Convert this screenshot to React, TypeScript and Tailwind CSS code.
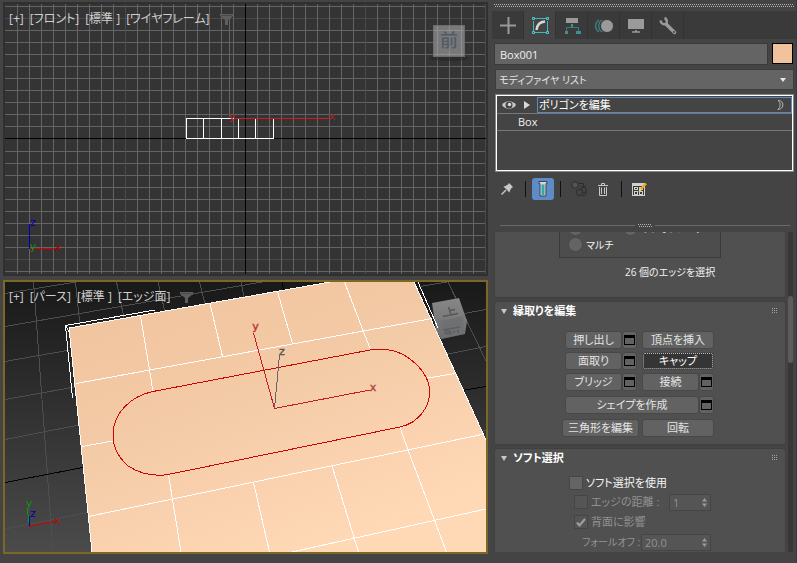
import { useState, type ReactNode } from "react";
import { clsx } from "clsx";

const range = (from: number, to: number, step: number) => {
  const out: number[] = [];
  for (let v = from; v <= to; v += step) out.push(v);
  return out;
};

export default function App() {
  return (
    <div className="flex h-screen min-h-[563px] gap-1 overflow-hidden border-r border-[#343850] bg-[#444444] font-['Open_Sans','Noto_Sans_CJK_JP',sans-serif] text-[11px] leading-4 text-[#e4e4e4] [font-feature-settings:'palt']">
      <main className="flex min-w-0 flex-1 flex-col gap-1 pt-0.5 pb-[9px] pl-[3px]">
        <Viewport labels={["[+]", "[フロント]", "[標準 ]", "[ワイヤフレーム]"]}>
          <FrontScene />
        </Viewport>
        <Viewport active labels={["[+]", "[パース]", "[標準 ]", "[エッジ面]"]}>
          <PerspectiveScene />
        </Viewport>
      </main>
      <CommandPanel />
    </div>
  );
}

function Viewport({ labels, active, children }: { labels: string[]; active?: boolean; children: ReactNode }) {
  return (
    <section
      className={clsx(
        "relative min-h-0 flex-1 overflow-hidden border-2",
        active ? "border-[#7c6727]" : "border-[#303030]"
      )}
    >
      {children}
      <div className="absolute top-[7px] left-1 flex items-center gap-1.5 text-[12px] leading-4 text-[#cfcfcf]">
        {labels.map((label) => (
          <button key={label} type="button" className="whitespace-nowrap">
            {label}
          </button>
        ))}
        <button type="button" aria-label="フィルタ" className="ml-1">
          <svg width="13" height="11" viewBox="0 0 13 11" className="block">
            <path d="M0 0h13v2L8 6v5H5V6L0 2z" fill="#5e5e5e" />
            <path d="M1 1.5h11" stroke="#4a4a4a" />
          </svg>
        </button>
      </div>
    </section>
  );
}

function FrontScene() {
  const columns = range(17, 485, 12);
  const rows = [...range(6, 126, 12), ...range(151, 271, 12)];
  return (
    <svg viewBox="5 4 481 270" preserveAspectRatio="xMidYMid slice" className="block h-full w-full bg-[#343434]">
      <g shapeRendering="crispEdges">
        {rows.map((y) => (
          <rect key={y} x="5" y={y} width="480" height="1" fill={y === 18 || y === 259 ? "#4a4a4a" : "#646464"} />
        ))}
        {columns.map((x) => (
          <rect key={x} x={x} y="4" width="1" height="270" fill={(x - 5) % 120 === 0 ? "#4a4a4a" : "#646464"} />
        ))}
        <rect x="229" y="14" width="1" height="103" fill="#646464" />
        <rect x="5" y="138" width="481" height="1" fill="#000" />
        <rect x="245" y="4" width="1" height="270" fill="#000" />
        <path d="M186 118.5H274M186 138.5H274M186.500 118V139M203.500 118V139M221.500 118V139M238.500 118V139M255.500 118V139M273.500 118V139" stroke="#fff" fill="none" />
        <rect x="234" y="118" width="97" height="1" fill="#d01c20" />
        <rect x="30" y="248" width="26" height="1" fill="#d40000" />
        <rect x="29" y="224" width="1" height="25" fill="#0000b4" />
      </g>
      <g fontSize="11" fontFamily="DejaVu Sans" textAnchor="middle">
        <text x="232" y="120" fill="#c02024">y</text>
        <text x="332" y="120" fill="#a82024">x</text>
        <text x="33" y="226" fill="#0000b4">z</text>
        <text x="58" y="251" fill="#a80000">x</text>
        <text x="33" y="250" fill="#149014">y</text>
      </g>
      <ellipse cx="449" cy="58" rx="20" ry="3" fill="#222" opacity=".5" />
      <rect x="433.500" y="25.500" width="31" height="31" fill="#808080" fillOpacity=".9" stroke="#6d6d6d" />
      <path d="M437.500 26v30M449.500 26v30M461.500 26v30M434 30.500h30M434 54.500h30" stroke="#989898" opacity=".7" />
      <rect x="439" y="31" width="20" height="20" fill="#74787f" opacity=".7" />
      <text x="449" y="47" fontSize="18" fontWeight="500" fontFamily="Noto Sans CJK JP" textAnchor="middle" fill="#555a62">前</text>
    </svg>
  );
}

function PerspectiveScene() {
  return (
    <svg viewBox="5 282 481 270" preserveAspectRatio="xMidYMid slice" className="block h-full w-full">
      <defs>
        <linearGradient id="sky" x1="0" y1="0" x2="0" y2="1">
          <stop offset="0" stopColor="#191919" />
          <stop offset="1" stopColor="#4b4b4b" />
        </linearGradient>
        <linearGradient id="skin" x1="0" y1="0" x2=".6" y2="1">
          <stop offset="0" stopColor="#efc29b" />
          <stop offset=".5" stopColor="#f4cba7" />
          <stop offset="1" stopColor="#ffd8b6" />
        </linearGradient>
        <linearGradient id="cube" x1="0" y1="0" x2="0" y2="1">
          <stop offset="0" stopColor="#8d8d8d" />
          <stop offset="1" stopColor="#747474" />
        </linearGradient>
      </defs>
      <rect x="5" y="282" width="481" height="270" fill="url(#sky)" />
      <g shapeRendering="crispEdges" fill="none">
        <path
          d="M5 293.500L76 282M5 326.500L262 282M5 361.500L70 350M5 399.500L75 387M5 439.500L79 425M5 529L88 512.500M33.500 282L37 330L53 552M75.500 282L80 326M116.500 282L124 318M158 282L165 312M199.500 282L205 304M241 282L244 297M420 286.500L447 282M440 318L486 309.500M445 354.500L486 346.500M478 433L486 430M448 282L486 361"
          stroke="#4e4e4e"
        />
        <path d="M5 482.500L83 467.500M462 390.500L486 386.500M282 282L284 292" stroke="#000" />
        <path d="M69 328L330 282H414L486 440V552H92z" fill="url(#skin)" />
        <path
          d="M330 282L69 328L92 552M414 282L486 440M155 310L65.500 325.500L72.500 398M66 326L70 334M418 282L438 328M76 383.500L432 318.500M82 446.500L113 441M427.500 378L455.500 373.500M88.500 516.500L482 434.500M292 552L486 509M140.500 315.500L153 391.500M168.500 475L181 552M210 303.500L222.500 356.500M253.500 482.500L269.500 552M277.500 291.500L292.500 343.500M332 466L358.500 552M344.500 282L363 330.500L370.500 349.500M400 427.500L408 450L446.500 552"
          stroke="#fff"
        />
        <path
          d="M153 391.500L370 350C383 348 394 350 403 354.500C416 362 428 374 429.500 389C431 407 418 423 400 427L168 474.500C152 477 139 473 128 466C118 457 113 447 113 435C113 413 131 396 153 391.500z"
          stroke="#cc0404"
        />
        <path d="M274.500 408.500L370 390M274.500 408.500L253.500 333" stroke="#c41c20" />
        <path d="M274.500 408.500L279.500 355" stroke="#666" />
        <path d="M29.500 526.500L55 521.500" stroke="#d40000" />
        <path d="M29.500 526L27 508" stroke="#0a9a0a" />
        <path d="M29.500 526V516" stroke="#0000b4" />
      </g>
      <g fontSize="11" fontFamily="DejaVu Sans" textAnchor="middle">
        <text x="373" y="391" fill="#b04440" stroke="#b04440" strokeWidth=".4">x</text>
        <text x="255.500" y="330" fill="#b83434" stroke="#b83434" strokeWidth=".4">y</text>
        <text x="282" y="355" fill="#555" stroke="#555" strokeWidth=".4">z</text>
        <text x="57" y="524" fill="#a81010">x</text>
        <text x="29" y="507" fill="#149014">y</text>
        <text x="33" y="517" fill="#0000b4">z</text>
      </g>
      <path d="M432 303L459 298L467 321L465 334L441 339L436 330z" fill="url(#cube)" opacity=".94" />
      <path d="M438 321L463 316L465 334L441 339z" fill="#6c6c6c" opacity=".35" />
      <path d="M442 321L461 317L463 325L444 329z" fill="#686b70" opacity=".5" />
      <path d="M443 316.500L458 313.500M448.500 307L451 314.500M450 310.500L455 309.500" stroke="#55585c" strokeWidth="1.500" fill="none" />
      <path d="M443 330L460 327M445 334L446 331.500L450 331L451 335M446 334L450 333M454 330.500V333M458 329.500V333" stroke="#5b5e63" strokeWidth="1.500" fill="none" />
      <path d="M418 282L438 328" stroke="#fff" shapeRendering="crispEdges" />
    </svg>
  );
}

const tabs: { name: string; icon: ReactNode }[] = [
  { name: "作成", icon: <path d="M3 11.500H19M11.500 3V20" stroke="#9a9a9a" strokeWidth="2" /> },
  {
    name: "修正",
    icon: (
      <>
        <path d="M4.500 7V17M18.500 7V17M6 4.500H17M6 18.500H17" stroke="#3fb8b8" />
        <path d="M3.500 3.500h2v2h-2zM17.500 3.500h2v2h-2zM3.500 17.500h2v2h-2zM17.500 17.500h2v2h-2z" stroke="#4cc8c8" />
        <path d="M7.500 16C8 11 10 8 16 7.500" stroke="#d8d8d8" strokeWidth="2.500" />
      </>
    ),
  },
  {
    name: "階層",
    icon: (
      <>
        <path d="M5 4h12v5H5z" fill="#9a9a9a" />
        <path d="M11 10V13.500M5.500 17V13.500H17.500V17" stroke="#357e7e" />
        <path d="M4 17h3v3H4zM15 17h5v3H15zM10 10h2v3h-2z" fill="#3f9090" />
      </>
    ),
  },
  {
    name: "モーション",
    icon: (
      <>
        <path d="M9.500 6C4.500 8 4.500 16 9.500 18M6 6C1.500 9 1.500 15 6 18" stroke="#3a8585" strokeWidth="1.300" />
        <circle cx="14" cy="12" r="6.500" fill="#9a9a9a" stroke="#3a3a3a" />
      </>
    ),
  },
  {
    name: "表示",
    icon: (
      <>
        <path d="M3 5h16v10H3z" fill="#9a9a9a" />
        <path d="M7 18h8M10 17h2" stroke="#9a9a9a" strokeWidth="1.500" />
      </>
    ),
  },
  {
    name: "ユーティリティ",
    icon: (
      <>
        <path d="M9.500 10.500L17.500 18.500" stroke="#9a9a9a" strokeWidth="3.500" strokeLinecap="round" />
        <path d="M3.500 6.500C4 10 6.500 10.500 9 10C10.500 8 10 5 7.500 4" stroke="#9a9a9a" strokeWidth="2.500" />
        <circle cx="17" cy="18" r=".9" fill="#3a3a3a" />
      </>
    ),
  },
];

function CommandPanel() {
  const [tab, setTab] = useState("修正");
  return (
    <aside className="flex w-[304px] shrink-0 flex-col pt-1 pb-[11px]">
      <DotStrip className="mx-0.5" />
      <nav className="mt-1 flex h-7 bg-[#3a3a3a]">
        {tabs.map(({ name, icon }) => (
          <button
            key={name}
            type="button"
            aria-label={name}
            onClick={() => setTab(name)}
            className={clsx(
              "flex w-8 items-center justify-center border-r border-[#333333]",
              tab === name && "bg-[#444444]"
            )}
          >
            <svg width="22" height="22" viewBox="0 0 22 22" fill="none">
              {icon}
            </svg>
          </button>
        ))}
      </nav>

      <div className="mt-1 flex gap-1 pr-[3px] pl-0.5">
        <input
          aria-label="オブジェクト名"
          defaultValue="Box001"
          className="h-[22px] min-w-0 flex-1 border border-[#3a3a3a] bg-[#646464] px-[5px] text-[11px] text-[#f0f0f0] outline-none"
        />
        <button type="button" aria-label="オブジェクトカラー" className="size-[21px] border border-black bg-[#f1c39c]" />
      </div>

      <div className="relative mt-1 mr-0.5 ml-[3px]">
        <select
          aria-label="モディファイヤ リスト"
          className="block h-[21px] w-full appearance-none border border-[#3c3c3c] bg-[#646464] px-[3px] text-[10px] text-[#e4e4e4] outline-none"
        >
          <option>モディファイヤ リスト</option>
        </select>
        <svg width="6" height="4" viewBox="0 0 6 4" className="pointer-events-none absolute top-[9px] right-2">
          <path d="M0 0h6L3 4z" fill="#e8e8e8" />
        </svg>
      </div>

      <ModifierStack />
      <StackToolbar />

      <div className="mt-[23px] mr-1.5 ml-2 flex items-center gap-[3px]">
        <div className="h-px flex-1 bg-[#6a6a6a]" />
        <DotStrip className="w-[14px]" />
        <div className="h-px flex-1 bg-[#6a6a6a]" />
      </div>

      <div className="mt-[5px] mr-[3px] ml-0.5 flex min-h-0 flex-1 justify-between overflow-hidden">
        <div className="flex w-[292px] flex-col gap-[3px]">
          <SelectionRollout />
          <EditBorderRollout />
          <SoftSelectionRollout />
        </div>
        <div className="w-[5px] rounded-full bg-[#373737] pt-16">
          <div className="h-[67px] rounded-full bg-[#5c5c5c]" />
        </div>
      </div>
    </aside>
  );
}

// Two staggered rows of dots used by the drag handles
function DotStrip({ className }: { className: string }) {
  return (
    <div className={clsx("flex flex-col gap-px", className)}>
      <div className="h-px bg-[repeating-linear-gradient(90deg,#b4b4b4_0_1px,transparent_1px_2px)]" />
      <div className="ml-px h-px bg-[repeating-linear-gradient(90deg,#b4b4b4_0_1px,transparent_1px_2px)]" />
    </div>
  );
}

function ModifierStack() {
  return (
    <div className="mt-1 mr-0.5 ml-[3px] h-[78px] border border-[#85858c]">
      <ul className="h-full border border-white">
        <li className="flex h-[18px] items-center border-b border-[#777777] pl-[5px]">
          <button type="button" aria-label="表示の切り替え">
            <svg width="14" height="10" viewBox="0 0 14 10" className="block">
              <path d="M0 5C3 0 11 0 14 5C11 10 3 10 0 5z" fill="#c8c8c8" />
              <circle cx="7" cy="5" r="3.500" fill="#444" />
              <circle cx="7.500" cy="4.500" r="1.800" fill="#d8d8d8" />
            </svg>
          </button>
          <button type="button" aria-label="展開" className="ml-2">
            <svg width="6" height="8" viewBox="0 0 6 8" className="block">
              <path d="M0 0L6 4L0 8z" fill="#d8d8d8" />
            </svg>
          </button>
          <div className="ml-[7px] flex h-4 min-w-0 flex-1 items-center justify-between border border-[#5f86bd] pr-[7px] pl-px text-white">
            <span>ポリゴンを編集</span>
            <svg width="7" height="10" viewBox="0 0 7 10" fill="none" stroke="#b8b8b8">
              <path d="M1 .5C7 0 8 9 1 9.500C3 7.500 4.500 3 1 .5z" />
            </svg>
          </div>
        </li>
        <li className="h-[17px] border-b border-[#777777] pl-[21px] text-[#f0f0f0]">Box</li>
      </ul>
    </div>
  );
}

function StackToolbar() {
  return (
    <div className="mt-[5px] flex h-[24px] items-center pl-2">
      <button type="button" aria-label="スタックを固定">
        <svg width="14" height="14" viewBox="0 0 14 14" className="block">
          <path d="M9 1L13 5L11.500 6L10 8.500L9.500 10.500L3.500 4.500L5.500 4L8 2.500z" fill="#c8c8c8" />
          <path d="M6 8L1.500 12.500" stroke="#c8c8c8" strokeWidth="1.500" />
        </svg>
      </button>
      <Separator className="ml-[11px]" />
      <button
        type="button"
        aria-label="最終結果を表示"
        aria-pressed="true"
        className="ml-1.5 flex size-[22px] items-center justify-center rounded-[3px] bg-[#5f8bc6]"
      >
        <svg width="10" height="16" viewBox="0 0 10 16">
          <path d="M1 0.500H9V2.500H8V15H2V2.500H1z" fill="#d8d8d8" stroke="#3c4450" />
          <path d="M3.500 3.500h3V14h-3z" fill="#30aaaa" />
        </svg>
      </button>
      <Separator className="ml-1.5" />
      <button type="button" aria-label="固有にする" disabled className="ml-2.5">
        <svg width="17" height="16" viewBox="0 0 17 16" fill="none" stroke="#2c2c2c" className="block">
          <circle cx="4" cy="4" r="3.200" fill="#555" />
          <path d="M7.500 2.500H12.500V5.500M10.500 4.500L12.500 6.500L15 4.500" />
          <circle cx="12.500" cy="9" r="2.800" fill="#444" />
          <circle cx="8.500" cy="11.500" r="3.200" fill="#444" />
          <path d="M11 14.500C14 15.500 16 13 15 10.500" />
        </svg>
      </button>
      <button type="button" aria-label="モディファイヤを除去" className="ml-[9px]">
        <svg width="12" height="15" viewBox="0 0 12 15" fill="none" stroke="#c8c8c8" className="block">
          <path d="M1 3.500H11M4.500 3V1.500H7.500V3M2.500 5V13.500H9.500V5M4.500 5.500V12M7.500 5.500V12" />
        </svg>
      </button>
      <Separator className="ml-3" />
      <button type="button" aria-label="モディファイヤ セットを設定" className="ml-2.5">
        <svg width="15" height="15" viewBox="0 0 15 15" className="block">
          <path d="M0 1H13V14H0z" fill="#d0d0d0" />
          <path d="M1 4h11v9H1z" fill="#383838" />
          <path d="M2 5h4v3H2zM7 5h4v3H7zM2 9h4v4H2zM7 9h4v4H7z" fill="#d0d0d0" />
          <path d="M3 6h2v1H3zM3 10h2v2H3zM8 10h2v2H8z" fill="#383838" />
          <path d="M14 1.500L8 8" stroke="#f0a818" strokeWidth="2.500" />
          <path d="M8.500 6L6 9.500L9.500 8.500z" fill="#f0d8a0" />
        </svg>
      </button>
    </div>
  );
}

function Separator({ className }: { className: string }) {
  return <div className={clsx("h-4 w-px bg-[#111111]", className)} />;
}

function SelectionRollout() {
  return (
    <section className="h-[66px] shrink-0 overflow-hidden rounded-b-[3px] border border-t-0 border-[#404040] bg-[#505050]">
      <fieldset className="-mt-4 ml-16 h-[42px] w-[162px] border border-[#3a3a3a] bg-[#4d4d4d] pl-2">
        <div className="flex h-[19px] items-end gap-10">
          <Radio name="オフ" />
          <Radio name="サブオブジェクト" label="サブオブジェクト" />
        </div>
        <div className="flex h-[17px] items-center">
          <Radio name="マルチ" label="マルチ" />
        </div>
      </fieldset>
      <p className="mt-1.5 pl-[130px] text-[10px] text-[#f4f4f4]">26 個のエッジを選択</p>
    </section>
  );
}

function Radio({ name, label }: { name: string; label?: string }) {
  return (
    <label className="flex items-center gap-[3px] whitespace-nowrap text-[10px] text-[#f4f4f4]">
      <input
        type="radio"
        name="preview"
        aria-label={name}
        className="size-[15px] appearance-none rounded-full border border-[#484848] bg-[#646464] checked:bg-[#8a8a8a]"
      />
      {label}
    </label>
  );
}

function Rollout({ title, className, children }: { title: string; className: string; children: ReactNode }) {
  const [open, setOpen] = useState(true);
  return (
    <section className={clsx("shrink-0 border border-[#404040] bg-[#505050]", className)}>
      <h2>
        <button
          type="button"
          aria-expanded={open}
          onClick={() => setOpen(!open)}
          className="flex h-[18px] w-full items-center pr-[7px] pl-1.5 font-bold text-white"
        >
          <svg width="6" height="5" viewBox="0 0 6 5" className="mr-1.5">
            <path d="M0 0h6L3 5z" fill="#c8c8c8" />
          </svg>
          {title}
          <svg width="6" height="6" viewBox="0 0 6 6" fill="#a0a0a0" shapeRendering="crispEdges" className="ml-auto">
            <path d="M0 0h1v1H0zM2 0h1v1H2zM4 0h1v1H4zM0 2h1v1H0zM2 2h1v1H2zM4 2h1v1H4zM0 4h1v1H0zM2 4h1v1H2zM4 4h1v1H4z" />
          </svg>
        </button>
      </h2>
      {open && children}
    </section>
  );
}

function PanelButton({ label, className, focused }: { label: string; className: string; focused?: boolean }) {
  return (
    <button
      type="button"
      className={clsx(
        "h-[18px] rounded-[3px] border border-[#484848] leading-4 whitespace-nowrap",
        focused ? "bg-[#353535] text-white outline-1 -outline-offset-2 outline-dotted outline-[#b8b8b8]" : "bg-[#626262] hover:bg-[#6c6c6c]",
        className
      )}
    >
      {label}
    </button>
  );
}

function SettingsButton({ label }: { label: string }) {
  return (
    <button
      type="button"
      aria-label={`${label}の設定`}
      className="flex h-[18px] w-[15px] items-center justify-center rounded-[3px] border border-[#484848] bg-[#626262]"
    >
      <span className="h-2.5 w-[11px] shrink-0 border border-t-[3px] border-black" />
    </button>
  );
}

function EditBorderRollout() {
  return (
    <Rollout title="縁取りを編集" className="h-[144px] rounded-[3px]">
      <div className="mt-[11px] flex flex-col items-start gap-[3px] pl-[70px]">
        <div className="flex">
          <PanelButton label="押し出し" className="w-[57px]" />
          <SettingsButton label="押し出し" />
          <PanelButton label="頂点を挿入" className="ml-[5px] w-[72px]" />
        </div>
        <div className="flex">
          <PanelButton label="面取り" className="w-[57px]" />
          <SettingsButton label="面取り" />
          <PanelButton label="キャップ" focused className="ml-[5px] w-[72px]" />
        </div>
        <div className="flex">
          <PanelButton label="ブリッジ" className="w-[57px]" />
          <SettingsButton label="ブリッジ" />
          <PanelButton label="接続" className="ml-[5px] w-[57px]" />
          <SettingsButton label="接続" />
        </div>
        <div className="mt-0.5 flex">
          <PanelButton label="シェイプを作成" className="w-[134px]" />
          <SettingsButton label="シェイプを作成" />
        </div>
        <div className="mt-0.5 -ml-[3px] flex gap-[3px]">
          <PanelButton label="三角形を編集" className="w-[77px]" />
          <PanelButton label="回転" className="w-[72px]" />
        </div>
      </div>
    </Rollout>
  );
}

function Check({ label, disabled, checked }: { label: string; disabled?: boolean; checked?: boolean }) {
  return (
    <label className={clsx("flex items-center gap-[3px] whitespace-nowrap", disabled ? "text-[#929292]" : "text-[#f4f4f4]")}>
      <span className="grid size-[14px] place-items-center">
        <input
          type="checkbox"
          disabled={disabled}
          defaultChecked={checked}
          className="peer col-start-1 row-start-1 size-[14px] appearance-none border border-[#454545] bg-[#646464] disabled:bg-[#555555]"
        />
        <svg
          width="10"
          height="9"
          viewBox="0 0 10 9"
          className="pointer-events-none invisible col-start-1 row-start-1 peer-checked:visible"
        >
          <path d="M1 4.500L3.500 7.500L9 1" fill="none" stroke="#a0a0a0" strokeWidth="2" />
        </svg>
      </span>
      {label}
    </label>
  );
}

function Spinner({ label, value, className }: { label: string; value: string; className: string }) {
  return (
    <div className={clsx("flex h-[17px] shrink-0 items-center border border-[#454545] bg-[#555555] pr-[3px] text-[#929292]", className)}>
      <input
        aria-label={label}
        disabled
        defaultValue={value}
        className="h-full w-0 min-w-0 flex-1 bg-transparent pl-[3px] text-[11px] leading-none outline-none"
      />
      <svg width="5" height="9" viewBox="0 0 5 9">
        <path d="M0 3.500L2.500 0L5 3.500zM0 5.500L2.500 9L5 5.500z" fill="#9a9a9a" />
      </svg>
    </div>
  );
}

function SoftSelectionRollout() {
  return (
    <Rollout title="ソフト選択" className="h-[120px] rounded-t-[3px]">
      <div className="mt-[7px] pl-[74px]">
        <div className="flex h-[18px] items-center">
          <Check label="ソフト選択を使用" />
        </div>
        <div className="flex h-5 w-[142px] items-center justify-between pl-[5px]">
          <Check label="エッジの距離 :" disabled />
          <Spinner label="エッジの距離" value="1" className="w-[42px]" />
        </div>
        <div className="flex h-5 items-center pl-[5px]">
          <Check label="背面に影響" disabled checked />
        </div>
        <div className="flex h-5 w-[142px] items-center justify-between pl-[13px] text-[#929292]">
          <span className="whitespace-nowrap text-[10px]">フォールオフ :</span>
          <Spinner label="フォールオフ" value="20.0" className="w-[70px]" />
        </div>
      </div>
    </Rollout>
  );
}
